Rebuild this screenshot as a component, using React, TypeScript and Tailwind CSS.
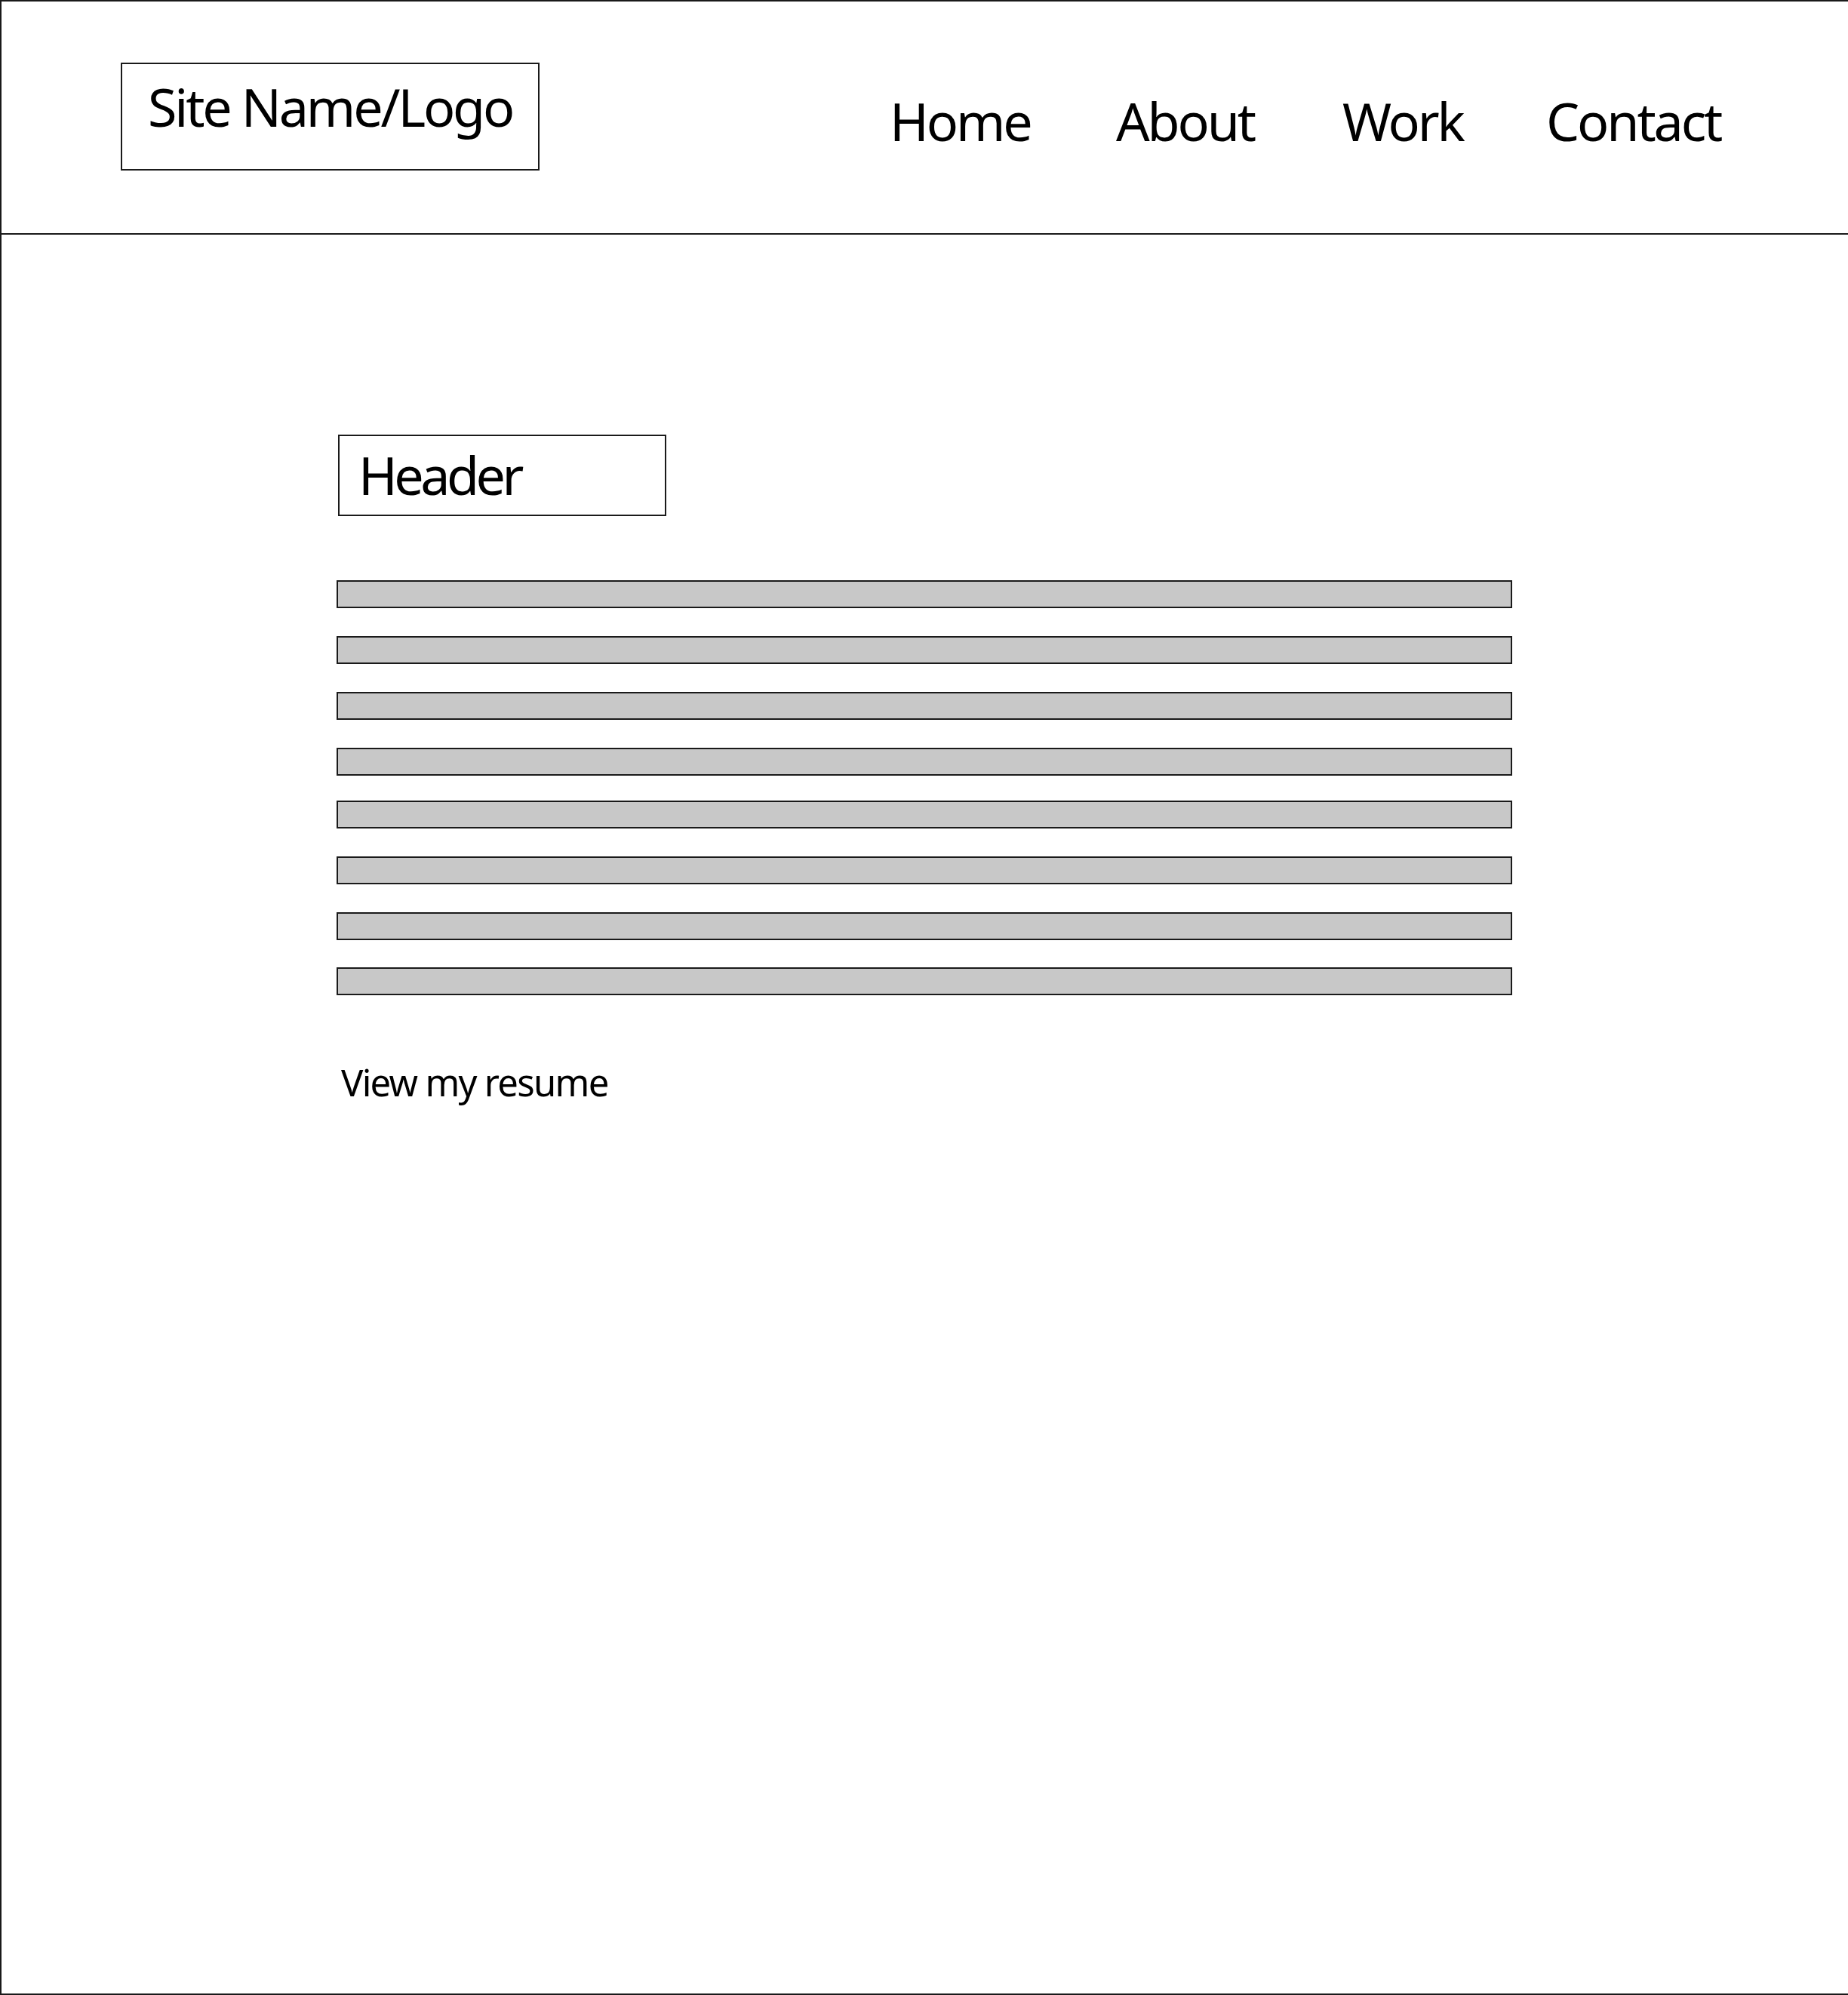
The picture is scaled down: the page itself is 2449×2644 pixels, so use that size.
import React from "react";

const bars = [
  "",
  "mt-[37px]",
  "mt-[37px]",
  "mt-[37px]",
  "mt-[33px]",
  "mt-[37px]",
  "mt-[37px]",
  "mt-[36px]",
];

export default function App() {
  return (
    <div className="w-[2449px] h-[2644px] bg-white border-l-2 border-t-2 border-b-2 border-[#1a1a1a] flex flex-col font-['Noto_Sans',sans-serif] text-black">
      <header className="h-[309px] border-b-2 border-[#1a1a1a] flex items-start pl-[158px]">
        <div className="mt-[81px] w-[555px] h-[143px] border-2 border-[#1a1a1a] pt-[21px] pl-[34px]">
          <span className="block text-[70px] leading-none tracking-[-0.045em] whitespace-nowrap">
            Site Name/Logo
          </span>
        </div>
        <nav className="ml-[464px] pt-[123px] flex text-[70px] leading-none tracking-[-0.045em] whitespace-nowrap">
          <a className="w-[300px]">Home</a>
          <a className="w-[300px]">About</a>
          <a className="w-[270px]">Work</a>
          <a>Contact</a>
        </nav>
      </header>
      <main className="pl-[444px] flex flex-col items-start">
        <div className="ml-[2px] mt-[265px] w-[435px] h-[108px] border-2 border-[#1a1a1a] pt-[16px] pl-[25px]">
          <h1 className="text-[70px] leading-none tracking-[-0.065em] font-normal">Header</h1>
        </div>
        <div className="mt-[85px] flex flex-col">
          {bars.map((cls, i) => (
            <div
              key={i}
              className={`${cls} w-[1558px] h-[37px] border-2 border-[#1a1a1a] bg-[#c8c8c8]`}
            />
          ))}
        </div>
        <p className="mt-[91px] ml-[6px] text-[49px] leading-none tracking-[-0.035em]">View my resume</p>
      </main>
    </div>
  );
}
